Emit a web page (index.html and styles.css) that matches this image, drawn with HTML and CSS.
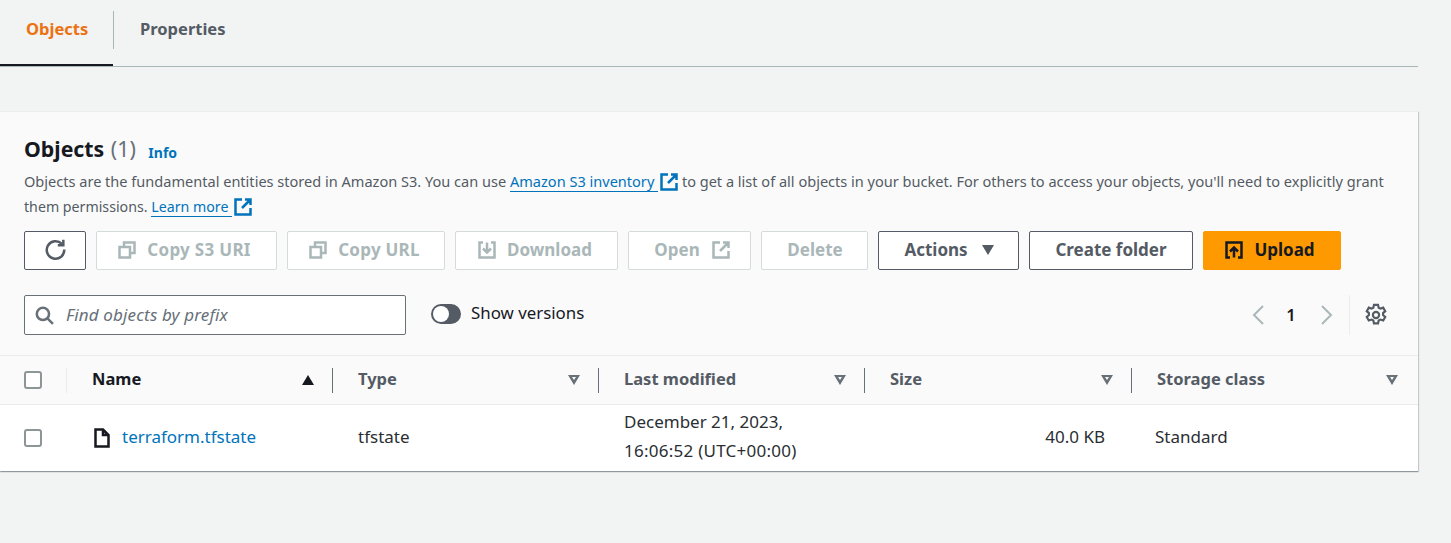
FILE: index.html
```html
<!DOCTYPE html>
<html lang="en">
	<head>
		<meta charset="UTF-8" />
		<title>Objects</title>
		<link rel="stylesheet" href="styles.css">
	</head>
	<body>
		<div class="tabs">
			<div class="tab tab-active">Objects</div>
			<div class="tab">Properties</div>
		</div>

		<div class="card">
			<div class="card-head">
				<h2 class="title">Objects <span class="count">(1)</span> <a class="info">Info</a></h2>
				<div class="desc">
					<p class="desc-line">Objects are the fundamental entities stored in Amazon S3. You can use <a class="link">Amazon S3 inventory </a><svg class="ext" viewBox="0 0 18 18"><path d="M8 1.500H1.500v15h15V10M11 1.500h5.500V7M16.500 1.500L8 10"/></svg> to get a list of all objects in your bucket. For others to access your objects, you'll need to explicitly grant</p>
					<p class="desc-line desc-short">them permissions. <a class="link">Learn more </a><svg class="ext" viewBox="0 0 18 18"><path d="M8 1.500H1.500v15h15V10M11 1.500h5.500V7M16.500 1.500L8 10"/></svg></p>
				</div>

				<div class="actions">
					<button class="btn btn-refresh"><svg class="ico" viewBox="0 0 20 20"><path d="M15.500 5.200A7.600 7.600 0 1 0 17.600 10"/><path d="M16.800 1.500v4.800H12"/></svg></button>
					<button class="btn btn-off w-s3"><svg class="ico" viewBox="0 0 18 18"><path d="M1.500 6h10.500v10.500H1.500zM6 6V1.500h10.500V12H12"/></svg>Copy S3 URI</button>
					<button class="btn btn-off w-url"><svg class="ico" viewBox="0 0 18 18"><path d="M1.500 6h10.500v10.500H1.500zM6 6V1.500h10.500V12H12"/></svg>Copy URL</button>
					<button class="btn btn-off w-down"><svg class="ico" viewBox="0 0 18 18"><path d="M5 1.500H1.500v15h15v-15H13M9 1.500V11M5 7.500L9 11.500l4-4"/></svg>Download</button>
					<button class="btn btn-off w-open">Open<svg class="ico ico-after" viewBox="0 0 18 18"><path d="M8 1.500H1.500v15h15V10M11 1.500h5.500V7M16.500 1.500L8 10"/></svg></button>
					<button class="btn btn-off w-del">Delete</button>
					<button class="btn w-act">Actions<span class="caret"></span></button>
					<button class="btn w-folder">Create folder</button>
					<button class="btn btn-primary w-up"><svg class="ico" viewBox="0 0 18 18"><path d="M5 16.500H1.500v-15h15v15H13M9 16.500V7M5 10.500l4-4 4 4"/></svg>Upload</button>
				</div>

				<div class="filters">
					<div class="search">
						<svg class="search-ico" viewBox="0 0 18 18"><circle cx="7.500" cy="7.500" r="5.800"/><path d="M11.800 11.800L17 17"/></svg>
						<span>Find objects by prefix</span>
					</div>
					<div class="toggle"><span class="knob"></span></div>
					<span class="toggle-label">Show versions</span>
					<div class="pager">
						<svg class="chev" viewBox="0 0 14 20"><path d="M12 1l-9 9 9 9"/></svg>
						<span class="page">1</span>
						<svg class="chev" viewBox="0 0 14 20"><path d="M2 1l9 9-9 9"/></svg>
						<span class="pager-sep"></span>
						<svg class="gear" viewBox="0 0 20 20"><path d="M8.300 1.500h3.400l.5 2.400 1.500.8 2.300-.8 1.700 2.900-1.800 1.600v1.700l1.800 1.600-1.700 2.900-2.300-.8-1.500.8-.5 2.400H8.300l-.5-2.400-1.500-.8-2.300.8-1.700-2.900 1.800-1.600V8.400L2.300 6.800 4 3.900l2.300.8 1.500-.8z"/><circle cx="10" cy="10" r="2.600"/></svg>
					</div>
				</div>
			</div>

			<div class="row row-head">
				<div class="cell cell-check"><span class="check"></span></div>
				<div class="cell cell-th th-sorted">Name<span class="sort sort-up"></span></div>
				<div class="cell cell-th">Type<span class="sort"></span></div>
				<div class="cell cell-th">Last modified<span class="sort"></span></div>
				<div class="cell cell-th">Size<span class="sort"></span></div>
				<div class="cell cell-th cell-last">Storage class<span class="sort"></span></div>
			</div>
			<div class="row row-body">
				<div class="cell cell-check"><span class="check"></span></div>
				<div class="cell cell-name">
					<svg class="file" viewBox="0 0 16 20"><path d="M1.500 1.500h7.500L14.500 7v11.500h-13zM9 1.500V7h5.500"/></svg>
					<a class="file-link">terraform.tfstate</a>
				</div>
				<div class="cell">tfstate</div>
				<div class="cell cell-date">
					<div>December 21, 2023,</div>
					<div class="date-time">16:06:52 (UTC+00:00)</div>
				</div>
				<div class="cell cell-size">40.0 KB</div>
				<div class="cell cell-last">Standard</div>
			</div>
		</div>
	</body>
</html>
```
FILE: styles.css
```css
* {
	box-sizing: border-box;
}

body {
	margin: 0;
	height: 543px;
	overflow: hidden;
	background-color: #f2f3f3;
	color: #16191f;
	font-family: "Noto Sans", "Open Sans", sans-serif;
	font-size: 17px;
}

/* tabs */
.tabs {
	display: flex;
	width: 1418px;
	height: 67px;
	padding-top: 11px;
	border-bottom: 1px solid #aab7b8;
}

.tab {
	height: 38px;
	padding: 7px 26px 0;
	color: #545b64;
	font-size: 16.500px;
	font-weight: 700;
	line-height: 22px;
}

.tab-active {
	position: relative;
	width: 114px;
	padding-right: 0;
	border-right: 1px solid #aab7b8;
	color: #ec7211;
}

.tab-active::after {
	content: "";
	position: absolute;
	left: 0;
	right: 0;
	top: 53px;
	height: 2px;
	background: #16191f;
}

/* card */
.card {
	width: 1418px;
	height: 360px;
	margin-top: 44px;
	background: #fafafa;
	box-shadow: 0 1px 1px 0 rgba(0, 28, 36, 0.3), 1px 1px 1px 0 rgba(0, 28, 36, 0.15);
	border-top: 1px solid #eaeded;
}

.card-head {
	height: 243px;
	padding: 22px 0 0 24px;
}

.title {
	margin: 0;
	font-size: 21.300px;
	font-weight: 700;
	line-height: 29px;
}

.count {
	margin-left: 1px;
	color: #687078;
	font-weight: 400;
}

.info {
	margin-left: 7px;
	color: #0073bb;
	font-size: 14px;
	font-weight: 700;
	vertical-align: -1px;
}

.desc {
	margin-top: 2px;
	color: #545b64;
	font-size: 14.560px;
	line-height: 25px;
}

.desc-line {
	height: 25px;
	margin: 0;
	white-space: nowrap;
}

.desc-short {
	font-size: 14.200px;
}

.link {
	border-bottom: 1px solid #0073bb;
	color: #0073bb;
}

.ext {
	width: 18px;
	height: 18px;
	margin-left: 2px;
	vertical-align: -4px;
	fill: none;
	stroke: #0073bb;
	stroke-width: 2.500;
}

/* buttons */
.actions {
	display: flex;
	gap: 10px;
	margin-top: 12px;
}

.btn {
	display: flex;
	align-items: center;
	justify-content: center;
	height: 39px;
	padding: 0 0 2px;
	border: 1px solid #545b64;
	border-radius: 2px;
	background: #fff;
	color: #545b64;
	font-family: inherit;
	font-size: 17px;
	font-weight: 700;
}

.btn-off {
	border-color: #d5dbdb;
	color: #aab7b8;
}

.btn-primary {
	border-color: #ff9900;
	background: #ff9900;
	color: #16191f;
}

.btn-refresh { width: 62px; }
.w-s3 { width: 181px; padding-right: 4px; letter-spacing: 0.3px; }
.w-url { width: 158px; padding-right: 3px; letter-spacing: 0.25px; }
.w-down { width: 163px; padding-right: 3px; }
.w-open { width: 123px; padding-left: 5px; }
.w-del { width: 107px; padding-left: 1px; }
.w-act { width: 141px; padding-left: 1px; }
.w-folder { width: 164px; }
.w-up { width: 138px; padding-right: 4px; }

.ico {
	width: 18px;
	height: 18px;
	margin-right: 11px;
	fill: none;
	stroke: currentColor;
	stroke-width: 2.500;
}

.btn-refresh .ico {
	width: 23px;
	height: 23px;
	margin: 0;
	stroke-width: 2.200;
}

.ico-after {
	margin: 0 0 0 12px;
}

.caret {
	width: 0;
	height: 0;
	margin-left: 14px;
	border-left: 6.500px solid transparent;
	border-right: 6.500px solid transparent;
	border-top: 10px solid #545b64;
}

/* search row */
.filters {
	display: flex;
	align-items: center;
	height: 40px;
	margin-top: 25px;
}

.search {
	display: flex;
	align-items: center;
	width: 382px;
	height: 40px;
	padding: 0 0 2px 10px;
	border: 1px solid #687078;
	border-radius: 2px;
	background: #fff;
	color: #687078;
	font-size: 17px;
	font-style: italic;
	letter-spacing: 0.15px;
}

.search-ico {
	width: 19px;
	height: 19px;
	margin: 2px 12px 0 0;
	fill: none;
	stroke: #687078;
	stroke-width: 2.400;
}

.toggle {
	width: 30px;
	height: 20px;
	margin: -2px 0 0 25px;
	padding: 2px;
	border-radius: 10px;
	background: #545b64;
}

.knob {
	display: block;
	width: 16px;
	height: 16px;
	border-radius: 50%;
	background: #fff;
}

.toggle-label {
	margin: -5px 0 0 10px;
	font-size: 16.850px;
}

.pager {
	display: flex;
	align-items: center;
	margin-left: auto;
	height: 40px;
	padding-right: 30px;
}

.chev {
	width: 14px;
	height: 20px;
	fill: none;
	stroke: #aab7b8;
	stroke-width: 2;
}

.page {
	width: 55px;
	padding: 0 3px 2px 0;
	text-align: center;
	font-size: 16.500px;
	font-weight: 600;
}

.pager-sep {
	width: 1px;
	height: 40px;
	margin: 0 14px 0 15px;
	background: #eaeded;
}

.gear {
	width: 24px;
	height: 24px;
	fill: none;
	stroke: #545b64;
	stroke-width: 1.800;
}

/* table */
.row {
	display: grid;
	grid-template-columns: 67px 266px 266px 266px 267px 286px;
	align-items: center;
	width: 1418px;
}

.row-head {
	height: 50px;
	border-top: 1px solid #eaeded;
	border-bottom: 1px solid #eaeded;
	color: #545b64;
	font-size: 16.500px;
	font-weight: 700;
}

.row-body {
	height: 66px;
	background: #fff;
	color: #2a2e33;
}

.cell {
	display: flex;
	align-items: center;
	padding-left: 25px;
}

.cell-check {
	padding-left: 24px;
}

.row-head .cell {
	height: 25px;
	border-right: 1px solid #687078;
	justify-content: space-between;
	padding-right: 18px;
}

.row-head .cell-check {
	border-right-color: #eaeded;
}

.row-head .cell-last {
	border-right: 0;
	padding-right: 20px;
}

.row-head .cell-th {
	padding-bottom: 4px;
}

.row-body .cell {
	padding-bottom: 3px;
}

.row-body .cell-check {
	padding-bottom: 0;
}

.row-body .cell-last {
	padding-left: 23px;
}

.th-sorted {
	color: #16191f;
}

.check {
	width: 18px;
	height: 18px;
	border: 2px solid #8d9596;
	border-radius: 3px;
	background: #fff;
}

.sort {
	position: relative;
	width: 0;
	height: 0;
	margin-top: 4px;
	border-left: 6.500px solid transparent;
	border-right: 6.500px solid transparent;
	border-top: 10px solid #687078;
}

.sort::after {
	content: "";
	position: absolute;
	left: -2.500px;
	top: -8px;
	border-left: 2.500px solid transparent;
	border-right: 2.500px solid transparent;
	border-top: 3px solid #fafafa;
}

.sort-up {
	border-top: 0;
	border-bottom: 10px solid #16191f;
}

.sort-up::after {
	display: none;
}

.cell-name {
	gap: 12px;
}

.file {
	width: 16px;
	height: 20px;
	margin-left: 2px;
	margin-top: 3px;
	fill: none;
	stroke: #16191f;
	stroke-width: 2.500;
}

.file-link {
	color: #0073bb;
}

.row-body .cell-date {
	display: block;
	padding-bottom: 0;
	margin-top: -4px;
	line-height: 29px;
}

.date-time {
	letter-spacing: 0.25px;
}

.cell-size {
	justify-content: flex-end;
	padding-right: 27px;
}
```
